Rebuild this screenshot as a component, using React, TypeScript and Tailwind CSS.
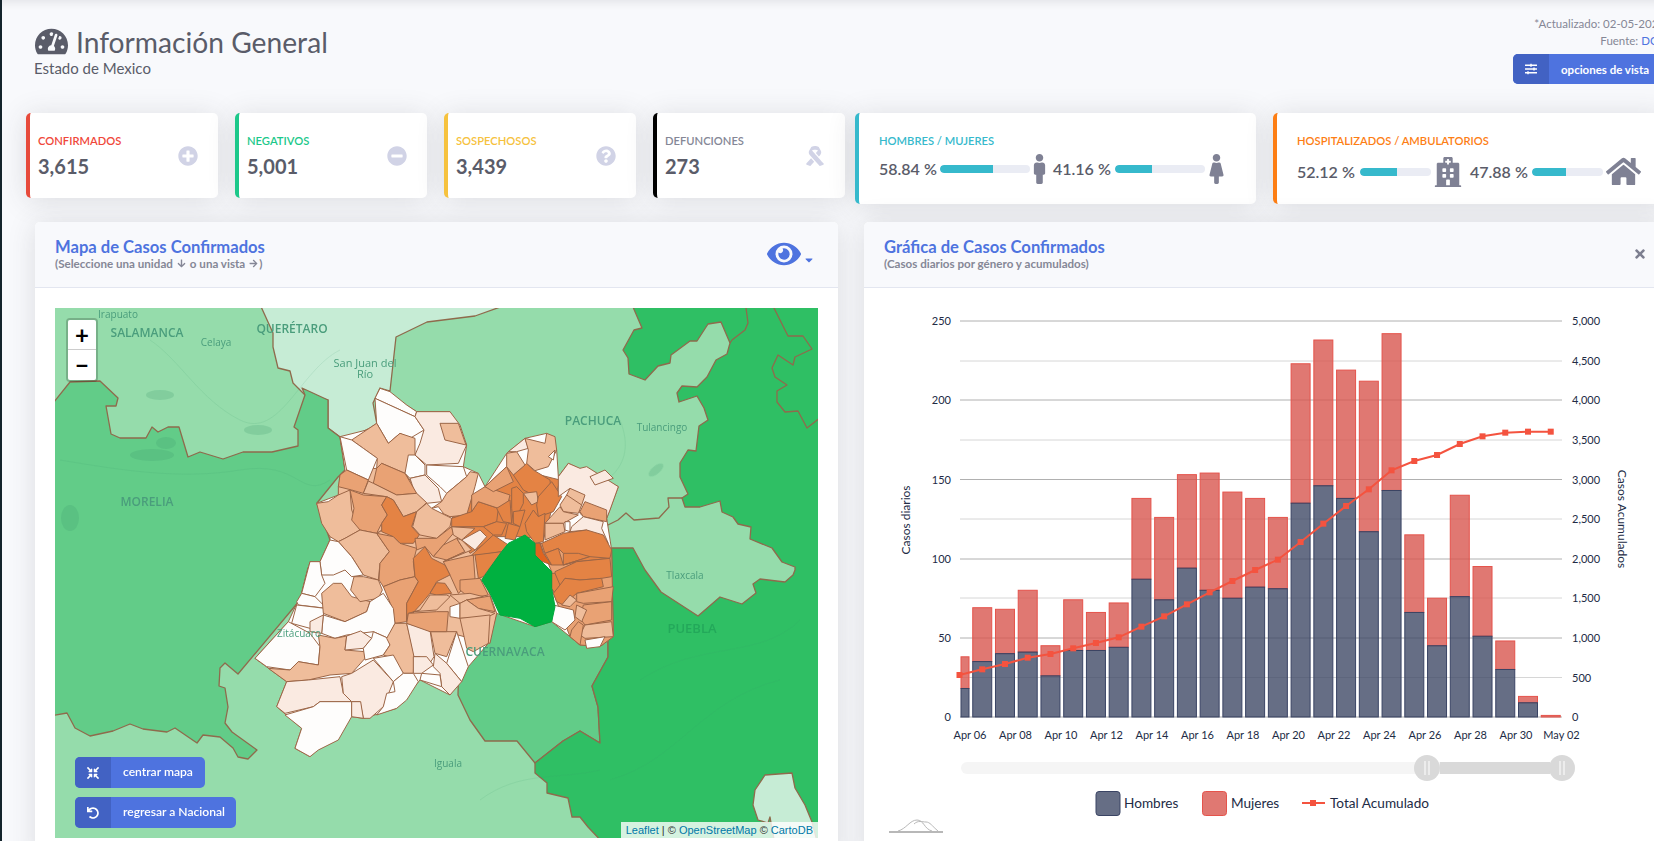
import {
  FaArrowDown,
  FaArrowRight,
  FaCaretDown,
  FaCompressArrowsAlt,
  FaEye,
  FaFemale,
  FaHome,
  FaHospital,
  FaMale,
  FaMinusCircle,
  FaPlusCircle,
  FaQuestionCircle,
  FaRibbon,
  FaSlidersH,
  FaTachometerAlt,
  FaTimes,
  FaUndo,
} from "react-icons/fa";
import type { ReactNode } from "react";

const W = "#fefdfc";
const P = "#faeae1";
const L = "#efbd9b";
const M = "#e9a274";
const S = "#e48344";
const X = "#e0641f";

// municipios, coordinates are in a 3x grid starting at 230,380
const munis: [string, string][] = [
  // bloques de fondo para que no queden huecos entre municipios
  [L, "325,320 350,270 440,265 455,250 525,280 590,368 520,410 440,460 365,420 325,345"],
  [L, "440,460 560,395 665,415 800,440 760,590 800,700 780,790 530,725 460,620"],
  [S, "665,415 830,260 990,300 940,480 880,470 800,470 720,520"],
  [M, "930,490 1145,510 1150,770 1110,800 1050,795 1020,770 965,625 965,575"],
  [W, "450,25 480,35 530,75 560,95 555,110 435,55"],
  [W, "435,55 555,110 582,150 540,175 510,160 475,190 440,130"],
  [P, "560,95 660,95 690,135 710,195 685,250 590,255 555,225 570,190 582,150 555,110"],
  [L, "630,130 685,130 708,195 645,180"],
  [L, "365,180 410,150 440,130 475,190 510,160 555,175 555,225 525,280 455,250 440,265 442,235 400,205"],
  [W, "330,170 365,180 400,205 442,235 415,300 350,270"],
  [W, "535,225 555,225 585,255 585,285 540,295 525,280"],
  [W, "590,255 700,260 710,290 650,340 630,320 590,285"],
  [P, "540,295 585,285 625,325 635,365 590,370 555,340"],
  [M, "455,250 525,280 560,340 500,345 430,310 440,265"],
  [M, "350,270 415,300 400,340 365,330 325,320 330,285"],
  [L, "415,303 430,310 500,345 560,340 590,368 560,395 520,410 490,360 470,350 400,340"],
  [L, "720,275 745,280 735,320 710,405 660,410 605,385 635,365 650,340 710,290"],
  [W, "605,385 625,380 640,400 620,412"],
  [L, "260,370 295,365 325,345 360,330 365,390 390,450 345,475 325,485 300,470 275,430"],
  [M, "360,330 400,345 470,350 455,375 472,405 455,430 440,460 390,450 365,420 372,385"],
  [S, "470,350 490,360 520,410 560,395 545,440 568,465 550,490 510,490 490,470 455,455 455,430 472,405 455,375"],
  [L, "560,395 590,370 605,385 665,415 660,440 620,475 570,465 548,440"],
  [L, "345,475 390,450 440,460 478,515 450,550 445,600 400,585 365,530 325,485"],
  [M, "440,460 490,470 510,490 560,505 550,545 555,590 510,600 460,620 447,600 450,550 478,515"],
  [M, "460,620 510,600 555,590 565,605 530,670 530,725 495,730 485,680"],
  [M, "555,475 620,475 665,440 670,460 640,495 610,530 585,500 560,510"],
  [M, "640,495 680,475 705,515 650,540 610,530"],
  [L, "680,475 695,480 725,510 640,545 705,515"],
  [L, "665,440 735,445 695,480 670,465"],
  [P, "695,480 750,450 770,470 735,510"],
  [M, "640,545 730,525 735,595 685,640 660,585"],
  [S, "585,500 605,535 645,555 660,585 620,605 600,640 575,670 530,720 530,670 565,605 555,590 550,535"],
  [S, "600,640 620,608 645,610 665,640 620,645"],
  [M, "690,600 750,595 775,645 720,655 690,630"],
  [W, "300,480 325,485 365,530 400,585 365,590 345,570 310,585 275,585 270,545"],
  [W, "240,545 270,545 275,585 285,610 255,650 215,640"],
  [W, "215,640 255,650 290,685 205,675 200,665"],
  [W, "200,675 285,685 280,705 240,745 185,730"],
  [L, "310,610 335,610 365,650 420,665 410,695 345,725 280,700 275,640"],
  [L, "372,590 400,590 445,600 457,630 445,655 390,665 362,630"],
  [W, "460,640 490,685 495,730 475,775 430,755 350,765 315,775 275,760 280,705 345,725 410,695 420,665"],
  [P, "280,705 275,760 240,755 240,725"],
  [W, "175,725 240,760 270,800 265,855 205,845 180,870 110,860 75,835"],
  [L, "265,765 315,775 350,768 345,810 405,815 405,835 365,880 300,885 235,900 170,905 115,865 180,870 205,845 265,855 270,800"],
  [P, "350,768 392,753 425,775 400,805 345,810"],
  [W, "430,755 475,775 480,795 460,825 405,840 400,805 425,775"],
  [L, "495,730 530,730 552,820 550,880 520,880 490,835 460,825 480,795 470,775"],
  [P, "530,730 600,750 612,830 590,865 570,830 552,830"],
  [P, "550,830 590,830 610,855 575,880 550,880"],
  [L, "602,755 680,755 650,830 615,820"],
  [W, "680,755 715,860 695,905 650,850"],
  [P, "615,820 650,850 695,905 660,945 635,920 630,880 610,860"],
  [W, "575,880 630,885 635,920 570,900"],
  [P, "170,905 235,900 330,890 340,940 365,965 270,965 250,980 165,1000 140,980"],
  [P, "335,890 365,880 430,840 490,905 460,980 420,1015 400,1015 390,965 365,965 340,940"],
  [W, "430,835 490,825 520,880 490,905"],
  [W, "490,905 520,880 550,880 565,905 530,960 500,985 440,1005 460,980 470,940 495,935"],
  [W, "165,1005 250,980 270,965 365,965 365,1010 325,1080 265,1110 240,1130 195,1105 215,1045"],
  [P, "365,965 392,965 400,1015 365,1010"],
  [L, "530,725 535,700 570,690 600,645 650,645 660,650 620,690 550,695"],
  [M, "535,700 620,695 655,695 650,755 600,755 530,730"],
  [W, "660,680 690,670 690,715 660,710"],
  [L, "660,645 720,640 760,650 710,660 690,670"],
  [M, "710,660 780,648 795,695 745,685"],
  [L, "690,715 690,670 710,660 745,685 795,700 775,710"],
  [L, "690,715 780,705 775,790 730,815 710,805"],
  [S, "665,415 725,395 745,365 805,385 800,425 760,440 665,440"],
  [M, "725,345 765,320 840,345 835,365 805,385 745,365 725,395"],
  [M, "765,320 830,260 850,305 810,325 790,335"],
  [S, "725,525 790,465 835,495 815,515 750,525"],
  [S, "735,525 815,515 760,590 745,595"],
  [S, "760,440 800,425 830,430 815,465 790,465"],
  [S, "800,385 840,360 845,430 820,425"],
  [S, "835,430 870,440 855,480 825,475"],
  [S, "845,325 860,320 880,340 880,370 850,430 845,385"],
  [S, "850,395 885,390 870,440 850,430"],
  [S, "850,285 890,250 910,270 960,300 965,350 920,350 880,330"],
  [L, "880,340 920,335 925,365 905,375"],
  [S, "965,305 995,350 970,395 925,410 920,375 925,350"],
  [S, "910,390 925,410 945,400 940,485 915,490 890,455 885,430"],
  [L, "830,220 860,215 885,255 850,285 830,260"],
  [P, "835,215 885,175 895,205 860,215"],
  [L, "885,175 945,190 950,160 975,170 980,210 955,260 915,272 890,250 895,210"],
  [W, "955,230 975,210 970,240"],
  [P, "985,290 1015,250 1050,265 1070,260 1165,320 1140,390 1130,415 1060,410 1050,400 1020,325 985,350"],
  [P, "1080,290 1125,270 1150,295 1095,315"],
  [L, "1010,345 1020,325 1065,345 1055,375 1015,360"],
  [L, "990,375 1010,345 1055,375 1045,400 1000,395"],
  [M, "1065,365 1130,390 1130,425 1060,410 1050,395"],
  [L, "945,430 990,380 1000,395 1045,405 1000,430 950,430"],
  [L, "945,430 1000,430 1005,455 945,480"],
  [W, "1005,425 1020,425 1020,455 1005,450"],
  [P, "1025,440 1060,410 1120,425 1115,445 1135,490 1070,450 1020,455"],
  [S, "935,490 1000,460 1070,450 1120,465 1145,510 1140,535 1045,545 1000,520 985,505 945,520"],
  [X, "915,490 930,490 940,520 965,555 925,540 915,525"],
  [S, "945,520 985,505 1000,555 965,555"],
  [S, "1000,520 1045,520 1080,530 1000,555"],
  [S, "1000,555 1080,530 1140,535 1040,545"],
  [S, "975,575 1040,545 1140,535 1145,590 1115,595 1050,600 1005,595 990,620 975,590"],
  [S, "965,580 975,580 990,615 975,640 965,625"],
  [S, "1005,595 1050,600 1115,595 1120,620 1040,640 1000,675 980,665 970,640 990,615"],
  [M, "1040,640 1150,620 1145,665 1060,670 1040,665"],
  [L, "1020,645 1040,660 1020,680 995,675"],
  [M, "1060,675 1145,665 1145,720 1065,735 1050,715"],
  [L, "1065,735 1145,725 1150,770 1065,775 1050,765"],
  [W, "1065,780 1125,770 1110,800 1070,805"],
  [L, "1040,675 1070,690 1055,725 1035,710"],
  [W, "970,675 1030,690 1035,720 1005,750 965,725"],
  [M, "1045,725 1060,735 1050,795 1020,770 1025,750"],
];

const labels: [string, number, number, string][] = [
  ["Irapuato", 118, 318, "text-[10px] font-medium"],
  ["SALAMANCA", 147, 337, "text-[12px] font-semibold"],
  ["Celaya", 216, 346, "text-[10px] font-medium"],
  ["QUERÉTARO", 292, 333, "text-[12px] font-semibold"],
  ["San Juan del", 365, 367, "text-[11px] font-medium"],
  ["Río", 365, 378, "text-[11px] font-medium"],
  ["PACHUCA", 593, 425, "text-[12px] font-semibold"],
  ["Tulancingo", 662, 431, "text-[10px] font-medium"],
  ["MORELIA", 147, 506, "text-[12px] font-semibold"],
  ["Zitácuaro", 299, 637, "text-[10px] font-medium"],
  ["CUERNAVACA", 505, 656, "text-[12px] font-semibold"],
  ["Iguala", 448, 767, "text-[10px] font-medium"],
  ["Tlaxcala", 685, 579, "text-[10px] font-medium"],
];

function MapDrawing() {
  return (
    <svg viewBox="55 308 763 530" className="block h-full w-full">
      <rect x="55" y="308" width="763" height="530" fill="#95dcab" />
      <g stroke="#8f6a4c" strokeWidth="1.3" strokeLinejoin="round">
        <polygon
          points="258,300 273,333 273,347 278,368 290,371 293,383 305,395 328,400 328,428 340,437 352,437 368,429 378,430 373,403 380,388 390,391 396,337 427,322 475,316 520,300"
          fill="#c6ecd5"
        />
        <polygon
          points="50,407 70,382 100,381 118,398 116,406 106,406 111,434 120,438 146,438 152,427 158,432 168,427 179,427 188,457 200,452 223,459 243,452 272,452 298,446 298,430 294,427 305,395 302,388 328,400 328,428 340,437 345,470 338,477 317,503 330,540 320,567 308,568 300,600 238,674 225,663 220,668 219,686 225,688 228,707 225,723 232,732 257,750 248,759 238,757 233,748 220,737 203,735 197,743 175,728 167,732 143,729 130,724 113,731 90,736 75,728 67,713 50,716"
          fill="#62cc88"
        />
        <polygon
          points="460,600 458,695 470,720 485,741 517,741 535,763 563,741 580,731 600,743 598,707 592,686 608,657 608,637 600,600"
          fill="#62cc88"
        />
        <polygon
          points="630,300 642,328 634,330 623,350 628,358 629,374 645,380 658,366 670,363 671,355 690,341 697,341 708,324 721,322 730,343 727,354 716,360 707,377 697,387 682,386 677,393 679,402 697,396 704,408 708,420 699,426 696,451 688,450 680,463 680,477 688,494 682,498 685,507 700,507 720,501 722,512 733,517 738,524 751,527 750,539 772,548 782,562 795,567 795,570 793,575 785,582 760,579 753,584 756,593 742,604 720,597 698,616 661,592 645,570 633,548 610,548 608,637 608,657 592,686 598,707 600,743 580,731 563,741 535,763 535,773 547,783 547,793 568,798 572,817 580,817 588,827 605,845 825,845 825,300"
          fill="#2fbf64"
        />
        <polygon
          points="765,775 792,773 795,788 805,805 812,822 818,845 775,845 770,817 768,823 758,820 753,805 755,790"
          fill="#c6ecd5"
        />
        <polyline
          points="602,528 618,520 626,513 634,520 659,518 669,507 668,498 682,498"
          fill="none"
        />
        <polyline points="745,300 748,323 745,330 732,340 730,343" fill="none" />
        <polyline
          points="770,300 788,336 803,336 812,349 795,357 793,365 778,355 772,368 775,377 787,385 777,391 777,402 785,412 798,411 807,428 825,414"
          fill="none"
        />
      </g>
      {/* lagos y caminos, muy tenues */}
      <g fill="#3f9c70" opacity="0.22">
        <ellipse cx="160" cy="395" rx="14" ry="5" />
        <ellipse cx="152" cy="455" rx="22" ry="6" />
        <ellipse cx="166" cy="443" rx="10" ry="6" />
        <ellipse cx="70" cy="518" rx="9" ry="13" />
        <ellipse cx="258" cy="430" rx="14" ry="5" />
        <ellipse cx="656" cy="470" rx="9" ry="4" transform="rotate(-40 656 470)" />
      </g>
      <g fill="none" stroke="#3f9c70" strokeWidth="0.7" opacity="0.18">
        <path d="M60 460 C 120 470 180 480 240 470 S 300 500 330 480" />
        <path d="M150 340 C 180 360 200 400 240 420 S 300 370 340 350" />
        <path d="M480 800 C 520 770 560 780 600 770" />
        <path d="M620 420 C 640 470 600 490 560 500" />
        <path d="M640 680 C 700 640 760 660 800 620" />
        <path d="M610 780 C 680 760 700 700 780 680" />
      </g>
      <g
        transform="translate(230 380) scale(0.33333)"
        stroke="#9c6546"
        strokeWidth="3"
        strokeLinejoin="round"
      >
        <polygon
          points="450,25 560,95 660,95 710,195 700,260 745,280 765,320 830,220 885,175 950,160 980,210 985,290 1015,250 1165,320 1130,415 1145,510 1150,770 1110,800 1050,795 1020,770 965,725 915,740 800,700 775,790 715,860 660,945 570,900 500,985 400,1015 365,1010 240,1130 195,1105 215,1045 140,980 170,905 75,835 175,725 215,640 240,545 270,545 300,480 300,470 260,370 325,345 330,285 345,270 330,170 410,150 440,130"
          fill={W}
        />
        {munis.map(([fill, points], i) => (
          <polygon key={i} points={points} fill={fill} />
        ))}
        <polygon
          points="855,480 885,465 915,490 915,525 965,575 965,625 975,680 965,725 915,740 870,715 810,705 780,640 755,600 790,550 815,515 835,490"
          fill="#00b140"
          stroke="#00a83c"
        />
      </g>
      {labels.map(([text, x, y, cls]) => (
        <text
          key={text}
          x={x}
          y={y}
          textAnchor="middle"
          fill="#4a9d7c"
          className={`${cls} [font-family:'Open_Sans',sans-serif]`}
        >
          {text}
        </text>
      ))}
      <text
        x="692"
        y="633"
        textAnchor="middle"
        fill="#23a85a"
        className="text-[13px] font-semibold [font-family:'Open_Sans',sans-serif]"
      >
        PUEBLA
      </text>
    </svg>
  );
}

// [hombres, total] por dia
const days: [number, number][] = [
  [18, 38], [35, 69], [40, 68], [41, 80], [26, 45], [42, 74], [42, 66], [44, 72], [87, 138],
  [74, 126], [94, 153], [80, 154], [75, 142], [82, 138], [81, 126], [135, 223], [146, 238],
  [138, 219], [117, 212], [143, 242], [66, 115], [45, 75], [76, 140], [51, 95], [30, 48],
  [9, 13], [0, 1],
];

const accumulated = [
  1125, 1108, 1092, 1073, 1062, 1045, 1029, 1012, 980, 949, 913, 877, 843, 810, 779, 726, 671,
  618, 568, 511, 483, 465, 432, 409, 398, 395, 395,
];

const dateLabels = [
  "Apr 06", "Apr 08", "Apr 10", "Apr 12", "Apr 14", "Apr 16", "Apr 18", "Apr 20", "Apr 22",
  "Apr 24", "Apr 26", "Apr 28", "Apr 30", "May 02",
];

const leftTicks = ["250", "", "200", "", "150", "", "100", "", "50", "", "0"];
const rightTicks = ["5,000", "4,500", "4,000", "3,500", "3,000", "2,500", "2,000", "1,500", "1,000", "500", "0"];
const tickYs = [321, 361, 400, 440, 479.5, 519, 559, 598, 638, 677.5, 717];

const dayX = (i: number) => 959.5 + 22.74 * i;
const toY = (v: number) => 717 - v * 1.584;
const lineY = (i: number) => 300 + accumulated[i] / 3;

function Chart() {
  return (
    <svg
      viewBox="864 288 790 553"
      className="block h-[553px] w-[790px] text-[11px] [font-family:Lato,sans-serif]"
    >
      {tickYs.map((y, i) => (
        <line
          key={y}
          x1="960"
          x2="1562"
          y1={y}
          y2={y}
          stroke={i % 2 === 0 ? "#b0b0b0" : "#d6d6d6"}
        />
      ))}
      {leftTicks.map((t, i) =>
        t ? (
          <text key={t} x="951" y={tickYs[i] + 4} textAnchor="end" fill="#222b45">
            {t}
          </text>
        ) : null,
      )}
      {rightTicks.map((t, i) => (
        <text key={t} x="1572" y={tickYs[i] + 4} fill="#222b45">
          {t}
        </text>
      ))}
      {days.map(([men, total], i) => {
        const cx = dayX(i);
        const left = i === 0 ? 961 : cx - 9.5;
        const right = i === 0 ? 969 : cx + 9.5;
        return (
          <g key={i}>
            <rect
              x={left}
              y={toY(total)}
              width={right - left}
              height={toY(men) - toY(total)}
              fill="#d8564f"
              fillOpacity="0.8"
              stroke="#e5534b"
            />
            <rect
              x={left}
              y={toY(men)}
              width={right - left}
              height={717 - toY(men)}
              fill="#404a66"
              fillOpacity="0.8"
              stroke="#3a4464"
            />
          </g>
        );
      })}
      <polyline
        points={accumulated.map((_, i) => `${dayX(i)},${lineY(i)}`).join(" ")}
        fill="none"
        stroke="#f4533f"
        strokeWidth="2"
      />
      {accumulated.map((_, i) => (
        <rect key={i} x={dayX(i) - 3} y={lineY(i) - 3} width="6" height="6" fill="#f4533f" />
      ))}
      {dateLabels.map((d, i) => (
        <text key={d} x={970 + 45.5 * i} y="739" textAnchor="middle" fill="#222b45">
          {d}
        </text>
      ))}
      <text
        transform="translate(910 520) rotate(-90)"
        textAnchor="middle"
        fill="#222b45"
        className="text-[12px]"
      >
        Casos diarios
      </text>
      <text
        transform="translate(1618 519) rotate(90)"
        textAnchor="middle"
        fill="#222b45"
        className="text-[12px]"
      >
        Casos Acumulados
      </text>

      {/* slider */}
      <rect x="961" y="762" width="614" height="12" rx="6" fill="#f5f5f5" />
      <rect x="1440" y="762" width="110" height="12" fill="#d9d9d9" />
      {[1427, 1562].map((cx) => (
        <g key={cx}>
          <circle cx={cx} cy="768" r="13" fill="#d9d9d9" />
          <path
            d={`M${cx - 2} 761v14M${cx + 2} 761v14`}
            stroke="#fff"
            strokeWidth="1"
            fill="none"
          />
        </g>
      ))}

      {/* leyenda */}
      <g className="text-[13.6px]" fill="#222b45">
        <rect x="1096" y="791.5" width="24" height="24" rx="3" fill="#666e85" stroke="#3a4464" />
        <text x="1124" y="808">
          Hombres
        </text>
        <rect x="1202.5" y="791.5" width="24" height="24" rx="3" fill="#e07872" stroke="#e5534b" />
        <text x="1231" y="808">
          Mujeres
        </text>
        <line x1="1302" x2="1325" y1="803" y2="803" stroke="#f4533f" strokeWidth="2" />
        <rect x="1310" y="800" width="6" height="6" fill="#f4533f" />
        <text x="1330" y="808">
          Total Acumulado
        </text>
      </g>

      {/* logo amCharts */}
      <g fill="none" stroke="#b8b8b8">
        <path d="M889 832H943" strokeWidth="2" />
        <path d="M898 831C906 829 910 820 917 820S924 829 932 831" />
        <path d="M914 824C918 820 922 822 926 822S932 826 938 831" />
      </g>
    </svg>
  );
}

function Card({
  color,
  label,
  value,
  icon,
  labelColor,
}: {
  color: string;
  label: string;
  value: string;
  icon: ReactNode;
  labelColor: string;
}) {
  return (
    <div
      className={`flex h-[85px] w-[192px] shrink-0 items-center justify-between rounded-[5px] border-l-4 bg-white pl-2 pr-5 shadow-[0_2.4px_28px_0_rgba(58,59,69,0.15)] ${color}`}
    >
      <div>
        <div className={`text-[11.2px] font-semibold leading-[14px] ${labelColor}`}>{label}</div>
        <div className="mt-[6px] text-[20px] font-bold leading-[24px] text-[#5a5c69]">{value}</div>
      </div>
      <div className="text-[20px] text-[#d1d3e6]">{icon}</div>
    </div>
  );
}

function Bar({ pct, width }: { pct: number; width: string }) {
  return (
    <div className={`h-2 overflow-hidden rounded-full bg-[#eaecf4] ${width}`}>
      <div className="h-full rounded-l-full bg-[#36b9cc]" style={{ width: `${pct}%` }} />
    </div>
  );
}

function Header({ title, sub, right }: { title: string; sub: ReactNode; right: ReactNode }) {
  return (
    <div className="flex h-[66px] items-center justify-between rounded-t-[5px] border-b border-[#e3e6f0] bg-[#f8f9fc] pb-[2px] pl-5 pr-5">
      <div>
        <h2 className="text-[16.6px] font-bold leading-5 text-[#4e73df]">{title}</h2>
        <div className="flex items-center gap-1 text-[11.6px] font-bold leading-[14px] text-[#858796]">
          {sub}
        </div>
      </div>
      {right}
    </div>
  );
}

function IconButton({ icon, text, width }: { icon: ReactNode; text: string; width: string }) {
  return (
    <div className={`flex h-[31px] overflow-hidden rounded-[5px] bg-[#4e73df] text-white ${width}`}>
      <span className="flex w-9 items-center justify-center bg-[#4262c3] text-[12px]">{icon}</span>
      <span className="flex items-center pl-3 text-[12.1px] font-semibold">{text}</span>
    </div>
  );
}

export default function App() {
  return (
    <div className="flex h-[841px] w-[1654px] overflow-hidden bg-[#f8f9fc] text-[#5a5c69] [font-family:Lato,sans-serif]">
      <div className="z-10 w-[2px] shrink-0 bg-[#14242c]" />
      <main className="w-[1680px] shrink-0 shadow-[inset_0_10px_10px_-8px_rgba(58,59,69,0.12)]">
        <header className="flex h-[113px] items-start justify-between pl-[33px] pr-[17px]">
          <div className="pt-[25px]">
            <h1 className="flex items-center gap-[8px] text-[28.2px] font-normal leading-[32px] text-[#5a5c69]">
              <FaTachometerAlt className="text-[33px]" />
              Información General
            </h1>
            <p className="-ml-[1px] text-[15px] leading-5">Estado de Mexico</p>
          </div>
          <div className="flex flex-col items-end pt-[15px] text-[11.5px] leading-[17px] text-[#858796]">
            <div>*Actualizado: 02-05-2020</div>
            <div>
              Fuente: <span className="text-[#4e73df]">DGE</span>
            </div>
            <div className="mt-[5px] flex h-[30px] w-[152px] overflow-hidden rounded-[5px] bg-[#4e73df] text-white">
              <span className="flex w-9 items-center justify-center bg-[#4262c3] text-[12px]">
                <FaSlidersH />
              </span>
              <span className="flex items-center pl-3 font-bold">opciones de vista</span>
            </div>
          </div>
        </header>

        <section className="flex items-start pl-[24px]">
          <Card
            color="border-[#e74a3b]"
            labelColor="text-[#f0483a]"
            label="CONFIRMADOS"
            value="3,615"
            icon={<FaPlusCircle />}
          />
          <div className="ml-[17px]">
            <Card
              color="border-[#1cc88a]"
              labelColor="text-[#1cc88a]"
              label="NEGATIVOS"
              value="5,001"
              icon={<FaMinusCircle />}
            />
          </div>
          <div className="ml-[17px]">
            <Card
              color="border-[#f6c23e]"
              labelColor="text-[#f6c23e]"
              label="SOSPECHOSOS"
              value="3,439"
              icon={<FaQuestionCircle />}
            />
          </div>
          <div className="ml-[17px]">
            <Card
              color="border-black"
              labelColor="text-[#858796]"
              label="DEFUNCIONES"
              value="273"
              icon={<FaRibbon />}
            />
          </div>

          <div className="ml-[10px] h-[91px] w-[401px] shrink-0 rounded-[5px] border-l-4 border-[#36b9cc] bg-white pl-5 pt-[21px] shadow-[0_2.4px_28px_0_rgba(58,59,69,0.15)]">
            <div className="text-[11.2px] font-semibold leading-[14px] text-[#36b9cc]">
              HOMBRES / MUJERES
            </div>
            <div className="mt-[6px] flex items-center text-[16px] font-semibold leading-[30px]">
              <span className="w-[61px]">58.84 %</span>
              <Bar pct={58.84} width="w-[90px]" />
              <span className="flex w-[23px] justify-center pr-[4px] text-[30px] text-[#7f8194]">
                <FaMale />
              </span>
              <span className="w-[62px]">41.16 %</span>
              <Bar pct={41.16} width="w-[90px]" />
              <span className="flex w-[23px] justify-center text-[30px] text-[#7f8194]">
                <FaFemale />
              </span>
            </div>
          </div>

          <div className="ml-[17px] h-[91px] w-[392px] shrink-0 rounded-[5px] border-l-4 border-[#fd7e14] bg-white pl-5 pt-[21px] shadow-[0_2.4px_28px_0_rgba(58,59,69,0.15)]">
            <div className="text-[11.2px] font-semibold leading-[14px] text-[#fd7e14]">
              HOSPITALIZADOS / AMBULATORIOS
            </div>
            <div className="mt-[6px] flex items-center text-[16px] font-semibold leading-[30px]">
              <span className="w-[63px]">52.12 %</span>
              <Bar pct={52.12} width="w-[71px]" />
              <span className="flex w-[39px] pl-[2px] text-[30px] text-[#7f8194]">
                <FaHospital />
              </span>
              <span className="w-[62px]">47.88 %</span>
              <Bar pct={47.88} width="w-[71px]" />
              <span className="flex w-[39px] pl-[3px] text-[35px] text-[#7f8194]">
                <FaHome />
              </span>
            </div>
          </div>
        </section>

        <section className="mt-[18px] flex items-start gap-[26px] pl-[33px]">
          <div className="h-[640px] w-[803px] shrink-0 rounded-[5px] bg-white shadow-[0_2.4px_28px_0_rgba(58,59,69,0.15)]">
            <Header
              title="Mapa de Casos Confirmados"
              sub={
                <>
                  (Seleccione una unidad <FaArrowDown className="text-[9px]" /> o una vista{" "}
                  <FaArrowRight className="-mr-[3px] text-[9px]" />)
                </>
              }
              right={
                <div className="mr-[3px] flex items-center gap-[2px] text-[#4e73df]">
                  <FaEye className="text-[34px]" />
                  <FaCaretDown className="mt-3 text-[12px]" />
                </div>
              }
            />
            <div className="px-5 pt-[20px]">
              <div className="relative h-[530px] w-[763px] overflow-hidden">
                <MapDrawing />
                <div className="absolute left-[11px] top-[10px] w-[32px] overflow-hidden rounded-[4px] border-2 border-[#00000033] bg-clip-padding">
                  <div className="flex h-[30px] items-center justify-center border-b border-[#ccc] bg-white text-[24px] font-bold leading-none text-black">
                    +
                  </div>
                  <div className="flex h-[30px] items-center justify-center bg-white text-[24px] font-bold leading-none text-black">
                    −
                  </div>
                </div>
                <div className="absolute bottom-[50px] left-[20px]">
                  <IconButton
                    icon={<FaCompressArrowsAlt />}
                    text="centrar mapa"
                    width="w-[130px]"
                  />
                </div>
                <div className="absolute bottom-[10px] left-[20px]">
                  <IconButton icon={<FaUndo />} text="regresar a Nacional" width="w-[161px]" />
                </div>
                <div className="absolute bottom-0 right-0 bg-white/80 px-[5px] text-[11px] leading-4 text-[#333] [font-family:'Liberation_Sans',sans-serif]">
                  <span className="text-[#0078a8]">Leaflet</span> | ©{" "}
                  <span className="text-[#0078a8]">OpenStreetMap</span> ©{" "}
                  <span className="text-[#0078a8]">CartoDB</span>
                </div>
              </div>
            </div>
          </div>

          <div className="h-[640px] w-[803px] shrink-0 rounded-[5px] bg-white shadow-[0_2.4px_28px_0_rgba(58,59,69,0.15)]">
            <Header
              title="Gráfica de Casos Confirmados"
              sub="(Casos diarios por género y acumulados)"
              right={<FaTimes className="text-[14px] text-[#7d7f90]" />}
            />
            <Chart />
          </div>
        </section>
      </main>
    </div>
  );
}
